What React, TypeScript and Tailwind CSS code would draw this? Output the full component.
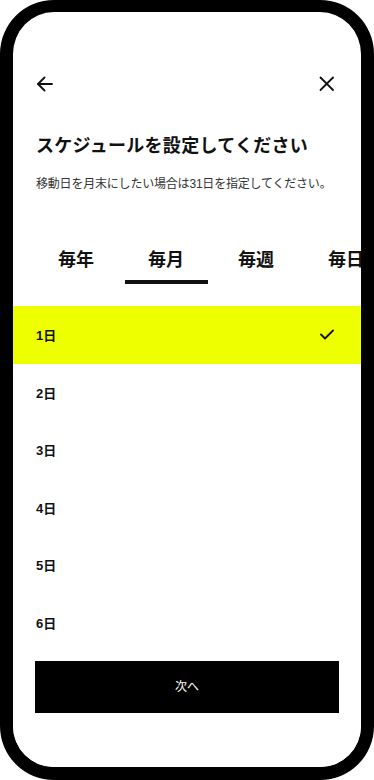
import React from "react";

const days = [1, 2, 3, 4, 5, 6, 7];
const tabs = ["毎年", "毎月", "毎週", "毎日"];

export default function App() {
  return (
    <div
      className="w-[374px] h-[780px] bg-white"
      style={{ fontFamily: '"Liberation Sans", "Noto Sans CJK JP", "Noto Sans", sans-serif' }}
    >
      <div className="w-full h-full border-[13px] border-t-[12px] border-black rounded-[54px] overflow-hidden bg-white flex flex-col text-[#111]">
        <div className="pt-[60px] px-[20px] flex justify-between items-center h-[84px]">
          <svg width="24" height="24" viewBox="0 0 24 24" fill="none" stroke="#111" strokeWidth="1.8" strokeLinecap="round" strokeLinejoin="round">
            <path d="M19 12H5" />
            <path d="m11.5 18.5-6.5-6.5 6.5-6.5" />
          </svg>
          <svg width="24" height="24" viewBox="0 0 24 24" fill="none" stroke="#111" strokeWidth="1.8" strokeLinecap="round" className="mr-[2px]">
            <path d="M18 5.5 5.5 18" />
            <path d="M5.5 5.5 18 18" />
          </svg>
        </div>
        <h1 className="mt-[37px] px-[23px] text-[18px] leading-[26px] font-bold tracking-[0.3px]">
          スケジュールを設定してください
        </h1>
        <p className="mt-[16px] px-[23px] text-[12px] leading-[18px] text-[#333] tracking-[-0.2px]">
          移動日を月末にしたい場合は31日を指定してください。
        </p>
        <div className="mt-[54px] flex pl-[18px] overflow-hidden shrink-0">
          {tabs.map((t, i) => (
            <div key={t} className="w-[90px] shrink-0 flex flex-col items-center">
              <span className="text-[18px] leading-[26px] font-bold">{t}</span>
              <div className={`mt-[7px] h-[4px] w-[83px] ${i === 1 ? "bg-[#111]" : "bg-transparent"}`} />
            </div>
          ))}
        </div>
        <div className="mt-[22px] flex-1 overflow-hidden">
          {days.map((d) => (
            <div
              key={d}
              className={`h-[57.5px] flex items-center justify-between pl-[23px] pr-[27px] ${d === 1 ? "bg-[#eeff00]" : ""}`}
            >
              <span className="text-[13px] font-bold mt-[2px]">{d}日</span>
              {d === 1 && (
                <svg width="14" height="11" viewBox="0 0 14 11" fill="none" stroke="#111" strokeWidth="1.8" strokeLinecap="round" strokeLinejoin="round">
                  <path d="M1 5.5 5 9.5 13 1.5" />
                </svg>
              )}
            </div>
          ))}
        </div>
        <div className="pt-[10px] pb-[54px] px-[22px] bg-white shrink-0">
          <button className="w-full h-[52px] bg-black text-white text-[12px] leading-[18px] flex items-center justify-center">
            次へ
          </button>
        </div>
      </div>
    </div>
  );
}
